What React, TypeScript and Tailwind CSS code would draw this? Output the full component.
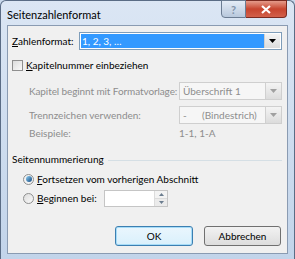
import React from 'react';

const font = { fontFamily: 'Lato, "Noto Sans", sans-serif' };

function ComboArrow({ disabled }: { disabled?: boolean }) {
  return (
    <div className="w-[16px] h-full flex items-center justify-center border-l border-[#d0d0d0] bg-gradient-to-b from-[#f4f4f4] to-[#dcdcdc]">
      <svg width="7" height="4" viewBox="0 0 7 4">
        <path d="M0 0h7L3.5 4z" fill={disabled ? '#a0a0a0' : '#000'} />
      </svg>
    </div>
  );
}

export default function App() {
  return (
    <div className="w-[295px] h-[259px] bg-[#c9d9ec] text-[10px] text-black overflow-hidden whitespace-nowrap" style={font}>
      <div className="w-full h-full border border-[#5a6c85] border-b-0 rounded-t-[6px] bg-gradient-to-b from-[#dbe6f4] to-[#c2d4ea] flex flex-col pl-[6px] pr-[6px] pb-[5px]">
        {/* title bar */}
        <div className="h-[24px] flex items-start relative shrink-0">
          <span className="pt-[6px] text-[11px] text-black">Seitenzahlenformat</span>
          <div className="absolute right-[1px] top-[-1px] flex">
            <div className="w-[25px] h-[18px] border border-[#6b7c92] rounded-bl-[4px] bg-gradient-to-b from-[#e4ecf6] to-[#b8c8dc] flex items-center justify-center text-[#8193aa] text-[11px] font-bold leading-none">
              ?
            </div>
            <div className="w-[41px] h-[18px] border border-[#7a2a20] border-l-0 rounded-br-[4px] bg-gradient-to-b from-[#e49a8a] via-[#c7442e] to-[#d2604a] flex items-center justify-center">
              <svg width="10" height="9" viewBox="0 0 10 9">
                <path d="M1 1l8 7M9 1L1 8" stroke="#fff" strokeWidth="2.2" />
              </svg>
            </div>
          </div>
        </div>

        {/* client */}
        <div className="flex-1 bg-[#f0f0f0] border border-[#8a9bb2] flex flex-col pl-[4px] pr-[5px]">
          <div className="flex items-center mt-[6px] h-[18px]">
            <span className="w-[67px]"><span className="underline">Z</span>ahlenformat:</span>
            <div className="flex-1 h-[18px] border border-[#7f9db9] bg-white flex p-[1px]">
              <div className="flex-1 bg-[#3399ff] text-white px-[1px] leading-[14px] text-[10px]">1, 2, 3, …</div>
              <ComboArrow />
            </div>
          </div>

          <div className="flex items-center mt-[7px] h-[16px]">
            <div className="w-[11px] h-[11px] border border-[#8f8f8f] bg-gradient-to-br from-[#dcdcdc] to-[#fafafa] mr-[3px]" />
            <span><span className="underline">K</span>apitelnummer einbeziehen</span>
          </div>

          <div className="pl-[17px] text-[#8d8d8d] flex flex-col">
            <div className="flex items-center mt-[9px] h-[18px]">
              <span className="w-[150px] tracking-[-0.1px]">Kapitel beginnt mit Formatvorlage:</span>
              <div className="flex-1 h-[18px] border border-[#cfcfcf] bg-[#f6f6f6] flex">
                <span className="flex-1 px-[3px] leading-[16px]">Überschrift 1</span>
                <ComboArrow disabled />
              </div>
            </div>
            <div className="flex items-center mt-[6px] h-[18px]">
              <span className="w-[150px]">Trennzeichen verwenden:</span>
              <div className="flex-1 h-[18px] border border-[#cfcfcf] bg-[#f6f6f6] flex">
                <span className="flex-1 px-[3px] leading-[16px]">-&nbsp;&nbsp;&nbsp;&nbsp;&nbsp;&nbsp;(Bindestrich)</span>
                <ComboArrow disabled />
              </div>
            </div>
            <div className="flex items-center mt-[2px] h-[14px]">
              <span className="w-[150px]">Beispiele:</span>
              <span>1-1, 1-A</span>
            </div>
          </div>

          <div className="flex items-center mt-[11px] h-[16px]">
            <span>Seitennummerierung</span>
            <div className="flex-1 ml-[4px] mt-[3px] border-t border-[#d5dfe5]" />
          </div>

          <div className="pl-[11px] flex flex-col">
            <div className="flex items-center mt-[4px] h-[16px]">
              <div className="w-[11px] h-[11px] rounded-full border border-[#8e8f8f] bg-[#f2f2f2] flex items-center justify-center mr-[3px]">
                <div className="w-[6px] h-[6px] rounded-full bg-gradient-to-br from-[#8fd0f4] to-[#134a80]" />
              </div>
              <span><span className="underline">F</span>ortsetzen vom vorherigen Abschnitt</span>
            </div>
            <div className="flex items-center mt-[2px] h-[18px]">
              <div className="w-[11px] h-[11px] rounded-full border border-[#8e8f8f] bg-gradient-to-br from-[#dcdcdc] to-[#fafafa] mr-[3px]" />
              <span className="w-[67px]"><span className="underline">B</span>eginnen bei:</span>
              <div className="w-[64px] h-[17px] border border-[#c5c5c5] bg-white flex justify-end">
                <div className="w-[13px] h-full flex flex-col border-l border-[#dcdcdc]">
                  <div className="flex-1 flex items-center justify-center bg-[#f3f3f3] border-b border-[#dcdcdc]">
                    <svg width="5" height="3" viewBox="0 0 5 3"><path d="M0 3h5L2.5 0z" fill="#6b7d8f" /></svg>
                  </div>
                  <div className="flex-1 flex items-center justify-center bg-[#ebebeb]">
                    <svg width="5" height="3" viewBox="0 0 5 3"><path d="M0 0h5L2.5 3z" fill="#6b7d8f" /></svg>
                  </div>
                </div>
              </div>
            </div>
          </div>

          <div className="flex justify-end gap-[11px] mt-auto mb-[7px] pr-[1px]">
            <button className="w-[78px] h-[20px] rounded-[3px] border border-[#3c7fb1] bg-gradient-to-b from-[#eaf6fd] to-[#d9f0fc] shadow-[inset_0_0_0_1px_#a6dcf8]">OK</button>
            <button className="w-[77px] h-[20px] rounded-[3px] border border-[#707070] bg-gradient-to-b from-[#f2f2f2] to-[#dddddd]">Abbrechen</button>
          </div>
        </div>
      </div>
    </div>
  );
}
